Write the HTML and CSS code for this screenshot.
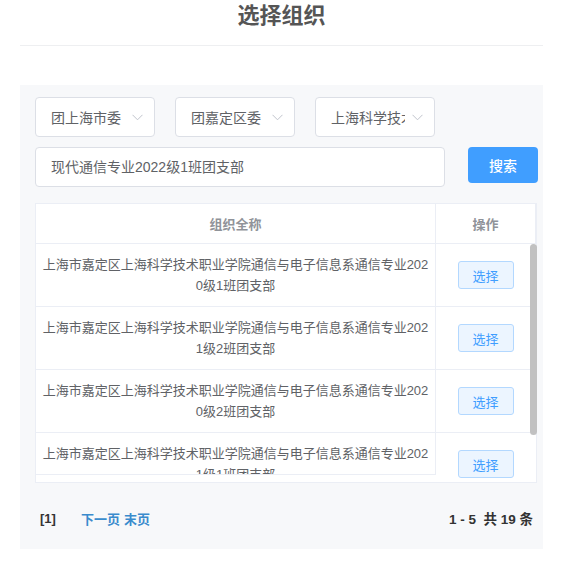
FILE: index.html
```html
<!DOCTYPE html>
<html lang="zh-CN">
<head>
  <meta charset="UTF-8" />
  <meta name="viewport" content="width=device-width, initial-scale=1.0" />
  <title>选择组织</title>
  <link rel="stylesheet" href="styles.css">
</head>
<body>
  <div class="seite">
    <header class="kopf">
      <h1>选择组织</h1>
    </header>

    <section class="panel">
      <div class="filter">
        <div class="auswahl">
          <span class="auswahl-text">团上海市委</span>
          <svg class="pfeil" width="11" height="7" viewBox="0 0 11 7"><polyline points="0.5,0.8 5.5,5.8 10.5,0.8" /></svg>
        </div>
        <div class="auswahl">
          <span class="auswahl-text">团嘉定区委</span>
          <svg class="pfeil" width="11" height="7" viewBox="0 0 11 7"><polyline points="0.5,0.8 5.5,5.8 10.5,0.8" /></svg>
        </div>
        <div class="auswahl">
          <span class="auswahl-text">上海科学技术职业学院</span>
          <svg class="pfeil" width="11" height="7" viewBox="0 0 11 7"><polyline points="0.5,0.8 5.5,5.8 10.5,0.8" /></svg>
        </div>
      </div>

      <div class="suche">
        <div class="eingabe">现代通信专业2022级1班团支部</div>
        <button class="btn-suche">搜索</button>
      </div>

      <div class="tabelle">
        <div class="thead">
          <div class="th th-name">组织全称</div>
          <div class="th th-op">操作</div>
        </div>
        <div class="tbody">
          <div class="spalte-name">
            <div class="zelle">上海市嘉定区上海科学技术职业学院通信与电子信息系通信专业2020级1班团支部</div>
            <div class="zelle">上海市嘉定区上海科学技术职业学院通信与电子信息系通信专业2021级2班团支部</div>
            <div class="zelle">上海市嘉定区上海科学技术职业学院通信与电子信息系通信专业2020级2班团支部</div>
            <div class="zelle">上海市嘉定区上海科学技术职业学院通信与电子信息系通信专业2021级1班团支部</div>
          </div>
          <div class="spalte-op">
            <div class="zelle"><button class="btn-wahl">选择</button></div>
            <div class="zelle"><button class="btn-wahl">选择</button></div>
            <div class="zelle"><button class="btn-wahl">选择</button></div>
            <div class="zelle"><button class="btn-wahl">选择</button></div>
          </div>
          <div class="balken"></div>
        </div>
      </div>

      <div class="seiten">
        <div class="seiten-links">
          <span class="aktuell">[1]</span>
          <a class="link">下一页</a>
          <a class="link">末页</a>
        </div>
        <div class="summe">1 - 5&nbsp;&nbsp;共 19 条</div>
      </div>
    </section>
  </div>
</body>
</html>
```

FILE: styles.css
```css
body {
  font-family: "Liberation Sans", "Noto Sans CJK SC", sans-serif;
  background: #fff;
  margin: 0;
  color: #606266;
}
.seite {
  width: 523px;
  margin-left: 20px;
}
.kopf {
  border-bottom: 1px solid #eeeff1;
  padding-bottom: 13px;
}
.kopf h1 {
  margin: 0;
  height: 32px;
  line-height: 32px;
  text-align: center;
  font-size: 22px;
  font-weight: 700;
  color: #555;
}

.panel {
  margin-top: 39px;
  background: #f7f8fa;
  padding: 12px 5px 0 15px;
  height: 464px;
  box-sizing: border-box;
}
.filter {
  display: flex;
  gap: 20px;
}
.auswahl {
  width: 120px;
  height: 40px;
  box-sizing: border-box;
  border: 1px solid #dcdfe6;
  border-radius: 4px;
  background: #fff;
  display: flex;
  align-items: center;
  padding-left: 15px;
  position: relative;
}
.auswahl-text {
  display: block;
  width: 74px;
  overflow: hidden;
  white-space: nowrap;
  font-size: 14px;
  color: #606266;
}
.pfeil {
  position: absolute;
  right: 11px;
  top: 16px;
}
.pfeil polyline {
  fill: none;
  stroke: #c0c4cc;
  stroke-width: 1;
}

.suche {
  display: flex;
  align-items: flex-start;
  margin-top: 10px;
}
.eingabe {
  width: 410px;
  height: 40px;
  box-sizing: border-box;
  border: 1px solid #dcdfe6;
  border-radius: 4px;
  background: #fff;
  padding-left: 15px;
  line-height: 38px;
  font-size: 14px;
  color: #606266;
}
.btn-suche {
  margin-left: 23px;
  width: 70px;
  height: 36px;
  border: none;
  border-radius: 4px;
  background: #409eff;
  color: #fff;
  font-family: inherit;
  font-size: 14px;
  font-weight: 500;
}

.tabelle {
  margin-top: 16px;
  width: 502px;
  box-sizing: border-box;
  border: 1px solid #ebeef5;
  background: #fff;
}
.thead {
  display: flex;
  height: 40px;
  box-sizing: border-box;
  border-bottom: 1px solid #ebeef5;
}
.th {
  display: flex;
  align-items: center;
  justify-content: center;
  font-size: 13px;
  font-weight: 700;
  color: #909399;
  box-sizing: border-box;
  border-right: 1px solid #ebeef5;
}
.th-name { width: 400px; }
.th-op { width: 100px; }

.tbody {
  display: flex;
  height: 238px;
  position: relative;
}
.spalte-name {
  width: 400px;
  height: 231px;
  box-sizing: border-box;
  overflow: hidden;
  border-right: 1px solid #ebeef5;
  border-bottom: 1px solid #ebeef5;
}
.spalte-op {
  width: 100px;
  height: 238px;
  overflow: hidden;
}
.zelle {
  height: 63px;
  box-sizing: border-box;
  border-bottom: 1px solid #ebeef5;
  flex-shrink: 0;
}
.spalte-name .zelle {
  padding: 10px 6px;
  font-size: 13px;
  line-height: 21px;
  text-align: center;
  word-break: break-all;
  color: #606266;
}
.spalte-op .zelle {
  display: flex;
  align-items: center;
  justify-content: center;
  padding-right: 1px;
}
.btn-wahl {
  width: 56px;
  height: 28px;
  border: 1px solid #b3d8ff;
  border-radius: 3px;
  background: #ecf5ff;
  color: #409eff;
  font-family: inherit;
  font-size: 13px;
  padding: 0;
}
.balken {
  position: absolute;
  right: -1px;
  top: 0;
  width: 7px;
  height: 191px;
  border-radius: 4px;
  background: #c1c1c1;
}

.seiten {
  display: flex;
  justify-content: space-between;
  align-items: center;
  height: 70px;
  padding: 0 5px;
  font-size: 13px;
  font-weight: 700;
  color: #333;
}
.seiten-links {
  display: flex;
  align-items: center;
}
.aktuell { margin-right: 25px; }
.link {
  color: #3a8bcd;
  margin-right: 4px;
}
.summe {
  font-size: 13.5px;
}
```
